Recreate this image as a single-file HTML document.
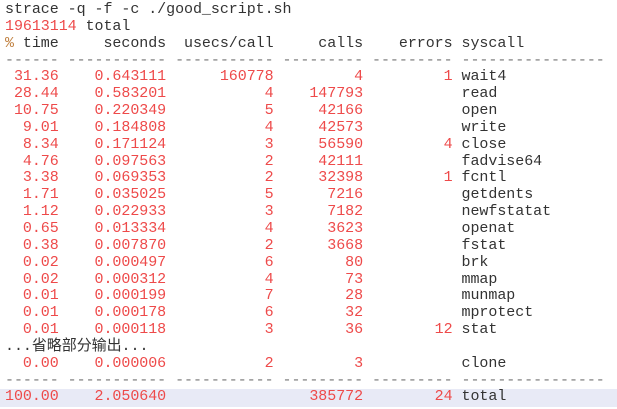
<!DOCTYPE html>
<html><head><meta charset="utf-8"><style>
body{margin:0;background:#fff;width:617px;height:409px;overflow:hidden}
pre{margin:0;position:absolute;left:5px;top:2px;font-family:"Liberation Mono","Noto Sans CJK SC",monospace;font-size:15px;line-height:16.85px;color:#333;letter-spacing:-0.05px}
.r{color:#ee4a4a}.g{color:#777}
.hl{position:absolute;left:0;top:389px;width:617px;height:18px;background:#e8eaf6}
</style></head><body>
<div class="hl"></div>
<pre>strace -q -f -c ./good_script.sh
<span class="r">19613114</span> total
<span style="color:#c08040">%</span> time     seconds  usecs/call     calls    errors syscall
<span class="g">------ ----------- ----------- --------- --------- ----------------</span>
<span class="r"> 31.36    0.643111      160778         4         1</span> wait4
<span class="r"> 28.44    0.583201           4    147793</span>           read
<span class="r"> 10.75    0.220349           5     42166</span>           open
<span class="r">  9.01    0.184808           4     42573</span>           write
<span class="r">  8.34    0.171124           3     56590         4</span> close
<span class="r">  4.76    0.097563           2     42111</span>           fadvise64
<span class="r">  3.38    0.069353           2     32398         1</span> fcntl
<span class="r">  1.71    0.035025           5      7216</span>           getdents
<span class="r">  1.12    0.022933           3      7182</span>           newfstatat
<span class="r">  0.65    0.013334           4      3623</span>           openat
<span class="r">  0.38    0.007870           2      3668</span>           fstat
<span class="r">  0.02    0.000497           6        80</span>           brk
<span class="r">  0.02    0.000312           4        73</span>           mmap
<span class="r">  0.01    0.000199           7        28</span>           munmap
<span class="r">  0.01    0.000178           6        32</span>           mprotect
<span class="r">  0.01    0.000118           3        36        12</span> stat
...省略部分输出...
<span class="r">  0.00    0.000006           2         3</span>           clone
<span class="g">------ ----------- ----------- --------- --------- ----------------</span>
<span class="r">100.00    2.050640                385772        24</span> total
</pre>
</body></html>
